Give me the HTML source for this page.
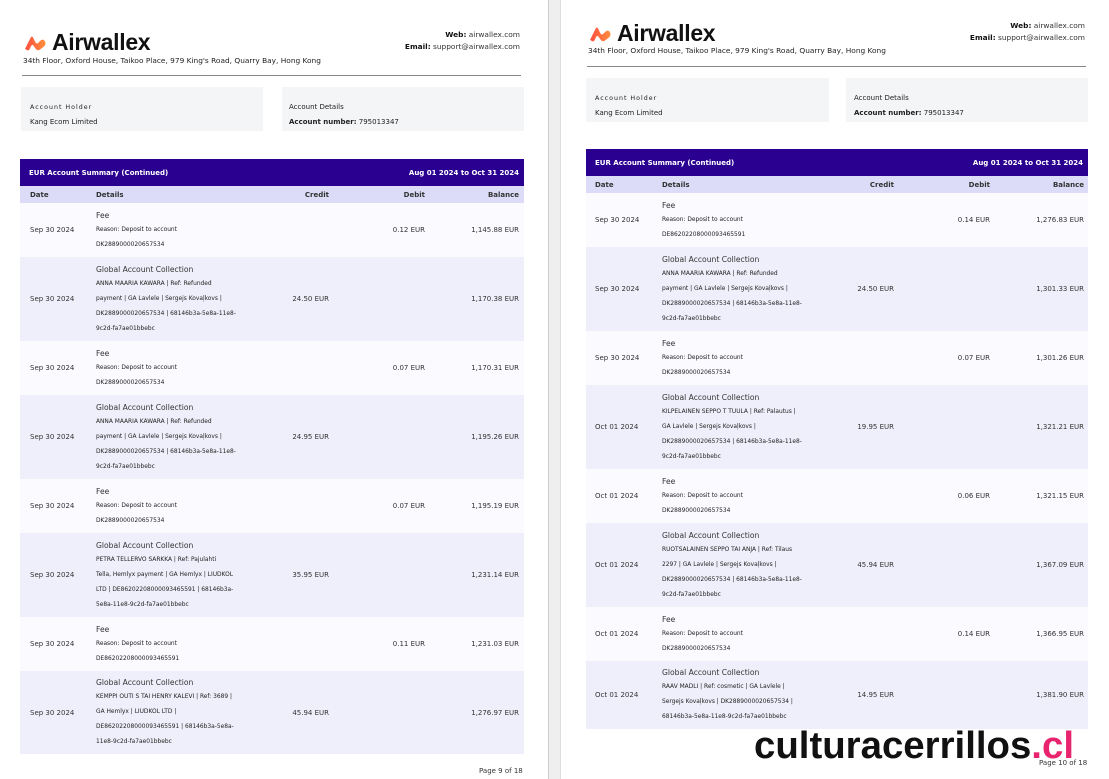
<!DOCTYPE html>
<html><head><meta charset="utf-8">
<style>
*{margin:0;padding:0;box-sizing:border-box}
body{width:1109px;height:779px;background:#fff;position:relative;overflow:hidden;font-family:"DejaVu Sans","Liberation Sans",sans-serif;color:#222}
.a{position:absolute}
.sep{position:absolute;left:548px;top:0;width:13px;height:779px;background:#efefef;border-left:1px solid #ccc;border-right:1px solid #ddd}
.logo{position:absolute;display:flex;align-items:center}
.logo span{font-family:"Liberation Sans",sans-serif;font-weight:bold;font-size:23px;color:#111;margin-left:5px;letter-spacing:-0.3px}
.addr{position:absolute;font-size:7.4px;color:#222}
.web{position:absolute;font-size:7.4px;text-align:right;line-height:12px;color:#333}
.web b{color:#111}
.hr{position:absolute;height:1px;background:#888}
.box{position:absolute;background:#f4f5f7;font-size:7px;padding:13px 0 0 9px;line-height:15px}
.box .t{letter-spacing:1px;font-size:6.3px}
.th{position:absolute;background:#2a0090;color:#fff;font-size:7px;font-weight:bold;display:flex;justify-content:space-between;align-items:center;padding:0 5px 0 9px}
.ch{position:absolute;background:#dcdcf8;font-size:7px;font-weight:bold;color:#333}
.row{position:absolute;font-size:7px;color:#333}
.f{background:#fafaff}
.g{background:#efeffb}
.c{position:absolute;top:0;bottom:0;display:flex;align-items:center}
.r{justify-content:flex-end}
.d .ti{font-size:7.6px;line-height:15px}
.d .s{font-size:5.9px;line-height:15px;color:#222}
.pg{position:absolute;font-size:7px;color:#333}
</style></head><body>

<div class="sep"></div>

<!-- LEFT PAGE -->
<div class="logo" style="left:23px;top:29px"><svg width="24" height="18" viewBox="0 0 23 17"><defs><linearGradient id="lg" x1="0" x2="1"><stop offset="0" stop-color="#ff4f42"/><stop offset="1" stop-color="#ff8e3c"/></linearGradient></defs><path d="M2 14 L7.5 3 Q8.5 1.5 9.5 3 L12 8 Q13 10 15 8 L17 6 Q19 4.5 20.5 6 L21.5 8 Q22 10 20 12 L16 15 Q14 16 12.5 14.5 L10 11 Q9 9.5 8 11 L6 15 Q4.5 16.5 2 14Z" fill="url(#lg)"/></svg><span>Airwallex</span></div>
<div class="addr" style="left:23px;top:56px">34th Floor, Oxford House, Taikoo Place, 979 King's Road, Quarry Bay, Hong Kong</div>
<div class="web" style="right:589px;top:29px"><b>Web:</b> airwallex.com<br><b>Email:</b> support@airwallex.com</div>
<div class="hr" style="left:22px;top:75px;width:499px"></div>
<div class="box" style="left:21px;top:87px;width:242px;height:44px"><div class="t">Account Holder</div>Kang Ecom Limited</div>
<div class="box" style="left:282px;top:87px;width:242px;height:44px;padding-left:7px"><div>Account Details</div><b>Account number:</b> 795013347</div>
<div class="th" style="left:20px;top:159px;width:504px;height:27px"><span>EUR Account Summary (Continued)</span><span>Aug 01 2024 to Oct 31 2024</span></div>
<div class="ch" style="left:20px;top:186px;width:504px;height:17px"><div class="c" style="left:10px">Date</div><div class="c" style="left:76px">Details</div><div class="c r" style="right:195px">Credit</div><div class="c r" style="right:99px">Debit</div><div class="c r" style="right:5px">Balance</div></div>

<div class="row f" style="left:20px;top:203px;width:504px;height:54px"><div class="c" style="left:10px">Sep 30 2024</div><div class="c d" style="left:76px"><div><div class="ti">Fee</div><div class="s">Reason: Deposit to account</div><div class="s">DK2889000020657534</div></div></div><div class="c r" style="right:99px">0.12 EUR</div><div class="c r" style="right:5px">1,145.88 EUR</div></div>
<div class="row g" style="left:20px;top:257px;width:504px;height:84px"><div class="c" style="left:10px">Sep 30 2024</div><div class="c d" style="left:76px"><div><div class="ti">Global Account Collection</div><div class="s">ANNA MAARIA KAWARA | Ref: Refunded</div><div class="s">payment | GA Lavlele | Sergejs Kovaļkovs |</div><div class="s">DK2889000020657534 | 68146b3a-5e8a-11e8-</div><div class="s">9c2d-fa7ae01bbebc</div></div></div><div class="c r" style="right:195px">24.50 EUR</div><div class="c r" style="right:5px">1,170.38 EUR</div></div>
<div class="row f" style="left:20px;top:341px;width:504px;height:54px"><div class="c" style="left:10px">Sep 30 2024</div><div class="c d" style="left:76px"><div><div class="ti">Fee</div><div class="s">Reason: Deposit to account</div><div class="s">DK2889000020657534</div></div></div><div class="c r" style="right:99px">0.07 EUR</div><div class="c r" style="right:5px">1,170.31 EUR</div></div>
<div class="row g" style="left:20px;top:395px;width:504px;height:84px"><div class="c" style="left:10px">Sep 30 2024</div><div class="c d" style="left:76px"><div><div class="ti">Global Account Collection</div><div class="s">ANNA MAARIA KAWARA | Ref: Refunded</div><div class="s">payment | GA Lavlele | Sergejs Kovaļkovs |</div><div class="s">DK2889000020657534 | 68146b3a-5e8a-11e8-</div><div class="s">9c2d-fa7ae01bbebc</div></div></div><div class="c r" style="right:195px">24.95 EUR</div><div class="c r" style="right:5px">1,195.26 EUR</div></div>
<div class="row f" style="left:20px;top:479px;width:504px;height:54px"><div class="c" style="left:10px">Sep 30 2024</div><div class="c d" style="left:76px"><div><div class="ti">Fee</div><div class="s">Reason: Deposit to account</div><div class="s">DK2889000020657534</div></div></div><div class="c r" style="right:99px">0.07 EUR</div><div class="c r" style="right:5px">1,195.19 EUR</div></div>
<div class="row g" style="left:20px;top:533px;width:504px;height:84px"><div class="c" style="left:10px">Sep 30 2024</div><div class="c d" style="left:76px"><div><div class="ti">Global Account Collection</div><div class="s">PETRA TELLERVO SARKKA | Ref: Pajulahti</div><div class="s">Tella, Hemlyx payment | GA Hemlyx | LIUDKOL</div><div class="s">LTD | DE86202208000093465591 | 68146b3a-</div><div class="s">5e8a-11e8-9c2d-fa7ae01bbebc</div></div></div><div class="c r" style="right:195px">35.95 EUR</div><div class="c r" style="right:5px">1,231.14 EUR</div></div>
<div class="row f" style="left:20px;top:617px;width:504px;height:54px"><div class="c" style="left:10px">Sep 30 2024</div><div class="c d" style="left:76px"><div><div class="ti">Fee</div><div class="s">Reason: Deposit to account</div><div class="s">DE86202208000093465591</div></div></div><div class="c r" style="right:99px">0.11 EUR</div><div class="c r" style="right:5px">1,231.03 EUR</div></div>
<div class="row g" style="left:20px;top:671px;width:504px;height:83px"><div class="c" style="left:10px">Sep 30 2024</div><div class="c d" style="left:76px"><div><div class="ti">Global Account Collection</div><div class="s">KEMPPI OUTI S TAI HENRY KALEVI | Ref: 3689 |</div><div class="s">GA Hemlyx | LIUDKOL LTD |</div><div class="s">DE86202208000093465591 | 68146b3a-5e8a-</div><div class="s">11e8-9c2d-fa7ae01bbebc</div></div></div><div class="c r" style="right:195px">45.94 EUR</div><div class="c r" style="right:5px">1,276.97 EUR</div></div>
<div class="pg" style="left:479px;top:767px">Page 9 of 18</div>

<!-- RIGHT PAGE -->
<div class="logo" style="left:588px;top:20px"><svg width="24" height="18" viewBox="0 0 23 17"><path d="M2 14 L7.5 3 Q8.5 1.5 9.5 3 L12 8 Q13 10 15 8 L17 6 Q19 4.5 20.5 6 L21.5 8 Q22 10 20 12 L16 15 Q14 16 12.5 14.5 L10 11 Q9 9.5 8 11 L6 15 Q4.5 16.5 2 14Z" fill="url(#lg)"/></svg><span>Airwallex</span></div>
<div class="addr" style="left:588px;top:46px">34th Floor, Oxford House, Taikoo Place, 979 King's Road, Quarry Bay, Hong Kong</div>
<div class="web" style="right:24px;top:20px"><b>Web:</b> airwallex.com<br><b>Email:</b> support@airwallex.com</div>
<div class="hr" style="left:587px;top:66px;width:499px"></div>
<div class="box" style="left:586px;top:78px;width:243px;height:44px"><div class="t">Account Holder</div>Kang Ecom Limited</div>
<div class="box" style="left:846px;top:78px;width:242px;height:44px;padding-left:8px"><div>Account Details</div><b>Account number:</b> 795013347</div>
<div class="th" style="left:586px;top:149px;width:502px;height:27px"><span>EUR Account Summary (Continued)</span><span>Aug 01 2024 to Oct 31 2024</span></div>
<div class="ch" style="left:586px;top:176px;width:502px;height:17px"><div class="c" style="left:9px">Date</div><div class="c" style="left:76px">Details</div><div class="c r" style="right:194px">Credit</div><div class="c r" style="right:98px">Debit</div><div class="c r" style="right:4px">Balance</div></div>

<div class="row f" style="left:586px;top:193px;width:502px;height:54px"><div class="c" style="left:9px">Sep 30 2024</div><div class="c d" style="left:76px"><div><div class="ti">Fee</div><div class="s">Reason: Deposit to account</div><div class="s">DE86202208000093465591</div></div></div><div class="c r" style="right:98px">0.14 EUR</div><div class="c r" style="right:4px">1,276.83 EUR</div></div>
<div class="row g" style="left:586px;top:247px;width:502px;height:84px"><div class="c" style="left:9px">Sep 30 2024</div><div class="c d" style="left:76px"><div><div class="ti">Global Account Collection</div><div class="s">ANNA MAARIA KAWARA | Ref: Refunded</div><div class="s">payment | GA Lavlele | Sergejs Kovaļkovs |</div><div class="s">DK2889000020657534 | 68146b3a-5e8a-11e8-</div><div class="s">9c2d-fa7ae01bbebc</div></div></div><div class="c r" style="right:194px">24.50 EUR</div><div class="c r" style="right:4px">1,301.33 EUR</div></div>
<div class="row f" style="left:586px;top:331px;width:502px;height:54px"><div class="c" style="left:9px">Sep 30 2024</div><div class="c d" style="left:76px"><div><div class="ti">Fee</div><div class="s">Reason: Deposit to account</div><div class="s">DK2889000020657534</div></div></div><div class="c r" style="right:98px">0.07 EUR</div><div class="c r" style="right:4px">1,301.26 EUR</div></div>
<div class="row g" style="left:586px;top:385px;width:502px;height:84px"><div class="c" style="left:9px">Oct 01 2024</div><div class="c d" style="left:76px"><div><div class="ti">Global Account Collection</div><div class="s">KILPELAINEN SEPPO T TUULA | Ref: Palautus |</div><div class="s">GA Lavlele | Sergejs Kovaļkovs |</div><div class="s">DK2889000020657534 | 68146b3a-5e8a-11e8-</div><div class="s">9c2d-fa7ae01bbebc</div></div></div><div class="c r" style="right:194px">19.95 EUR</div><div class="c r" style="right:4px">1,321.21 EUR</div></div>
<div class="row f" style="left:586px;top:469px;width:502px;height:54px"><div class="c" style="left:9px">Oct 01 2024</div><div class="c d" style="left:76px"><div><div class="ti">Fee</div><div class="s">Reason: Deposit to account</div><div class="s">DK2889000020657534</div></div></div><div class="c r" style="right:98px">0.06 EUR</div><div class="c r" style="right:4px">1,321.15 EUR</div></div>
<div class="row g" style="left:586px;top:523px;width:502px;height:84px"><div class="c" style="left:9px">Oct 01 2024</div><div class="c d" style="left:76px"><div><div class="ti">Global Account Collection</div><div class="s">RUOTSALAINEN SEPPO TAI ANJA | Ref: Tilaus</div><div class="s">2297 | GA Lavlele | Sergejs Kovaļkovs |</div><div class="s">DK2889000020657534 | 68146b3a-5e8a-11e8-</div><div class="s">9c2d-fa7ae01bbebc</div></div></div><div class="c r" style="right:194px">45.94 EUR</div><div class="c r" style="right:4px">1,367.09 EUR</div></div>
<div class="row f" style="left:586px;top:607px;width:502px;height:54px"><div class="c" style="left:9px">Oct 01 2024</div><div class="c d" style="left:76px"><div><div class="ti">Fee</div><div class="s">Reason: Deposit to account</div><div class="s">DK2889000020657534</div></div></div><div class="c r" style="right:98px">0.14 EUR</div><div class="c r" style="right:4px">1,366.95 EUR</div></div>
<div class="row g" style="left:586px;top:661px;width:502px;height:68px"><div class="c" style="left:9px">Oct 01 2024</div><div class="c d" style="left:76px"><div><div class="ti">Global Account Collection</div><div class="s">RAAV MADLI | Ref: cosmetic | GA Lavlele |</div><div class="s">Sergejs Kovaļkovs | DK2889000020657534 |</div><div class="s">68146b3a-5e8a-11e8-9c2d-fa7ae01bbebc</div></div></div><div class="c r" style="right:194px">14.95 EUR</div><div class="c r" style="right:4px">1,381.90 EUR</div></div>

<svg class="a" style="left:750px;top:725px" width="330" height="40"><text x="4" y="33" textLength="320" lengthAdjust="spacingAndGlyphs" font-family="Liberation Sans, sans-serif" font-weight="bold" font-size="38" fill="#111">culturacerrillos<tspan fill="#e8246e">.cl</tspan></text></svg>
<div class="pg" style="left:1039px;top:759px">Page 10 of 18</div>
</body></html>
